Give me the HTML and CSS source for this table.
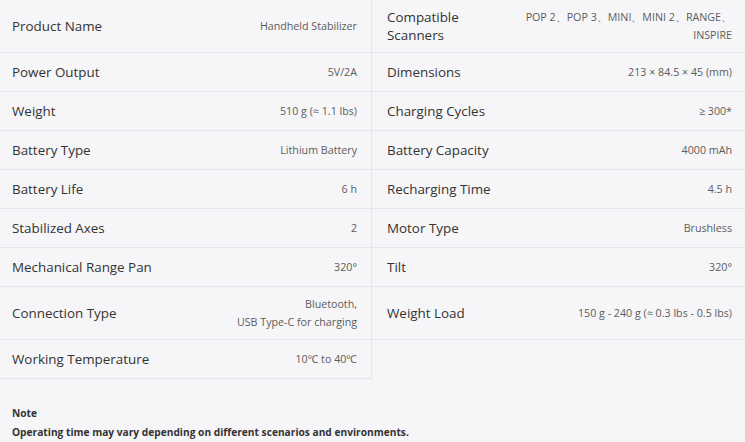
FILE: index.html
```html
<!DOCTYPE html>
<html lang="en">
<head>
<meta charset="utf-8">
<title>Specs</title>
<link rel="stylesheet" href="styles.css">
</head>
<body>
<div class="specs">
  <div class="cell left"><span class="label">Product Name</span><span class="value">Handheld Stabilizer</span></div>
  <div class="cell right"><span class="label">Compatible Scanners</span><span class="value">POP 2、POP 3、MINI、MINI 2、RANGE、INSPIRE</span></div>

  <div class="cell left"><span class="label">Power Output</span><span class="value">5V/2A</span></div>
  <div class="cell right"><span class="label">Dimensions</span><span class="value">213 × 84.5 × 45 (mm)</span></div>

  <div class="cell left"><span class="label">Weight</span><span class="value">510 g (≈ 1.1 lbs)</span></div>
  <div class="cell right"><span class="label">Charging Cycles</span><span class="value">≥ 300*</span></div>

  <div class="cell left"><span class="label">Battery Type</span><span class="value">Lithium Battery</span></div>
  <div class="cell right"><span class="label">Battery Capacity</span><span class="value">4000 mAh</span></div>

  <div class="cell left"><span class="label">Battery Life</span><span class="value">6 h</span></div>
  <div class="cell right"><span class="label">Recharging Time</span><span class="value">4.5 h</span></div>

  <div class="cell left"><span class="label">Stabilized Axes</span><span class="value">2</span></div>
  <div class="cell right"><span class="label">Motor Type</span><span class="value">Brushless</span></div>

  <div class="cell left"><span class="label">Mechanical Range Pan</span><span class="value">320°</span></div>
  <div class="cell right"><span class="label">Tilt</span><span class="value">320°</span></div>

  <div class="cell left"><span class="label">Connection Type</span><span class="value">Bluetooth,<br>USB Type-C for charging</span></div>
  <div class="cell right"><span class="label">Weight Load</span><span class="value">150 g - 240 g (≈ 0.3 lbs - 0.5 lbs)</span></div>

  <div class="cell left"><span class="label">Working Temperature</span><span class="value">10℃ to 40℃</span></div>
</div>
<div class="note">
  <p class="note-title">Note</p>
  <p class="note-text">Operating time may vary depending on different scenarios and environments.</p>
</div>
</body>
</html>
```

FILE: styles.css
```css
html, body {
  margin: 0;
  padding: 0;
  background: #f6f6f8;
}
body {
  font-family: "Open Sans", "Noto Sans", sans-serif;
  color: #333;
}
.specs {
  display: grid;
  grid-template-columns: 372px 1fr;
  align-items: stretch;
}
.cell {
  box-sizing: border-box;
  min-height: 39px;
  display: flex;
  justify-content: space-between;
  align-items: center;
  gap: 12px;
  padding: 8px 14px 8px 12px;
  border-bottom: 1px solid #e6e6ea;
}
.cell.left {
  border-right: 1px solid #e6e6ea;
}
.cell.right {
  padding: 8px 13px 8px 15px;
}
.label {
  font-size: 13.4px;
  line-height: 18px;
  color: #333;
}
.value {
  font-size: 10.7px;
  line-height: 18px;
  color: #5c5c5c;
  text-align: right;
}
.note {
  padding: 25px 12px 0;
}
.note p {
  margin: 0;
  font-size: 10.2px;
  font-weight: 700;
  line-height: 19px;
  color: #333;
}
```
